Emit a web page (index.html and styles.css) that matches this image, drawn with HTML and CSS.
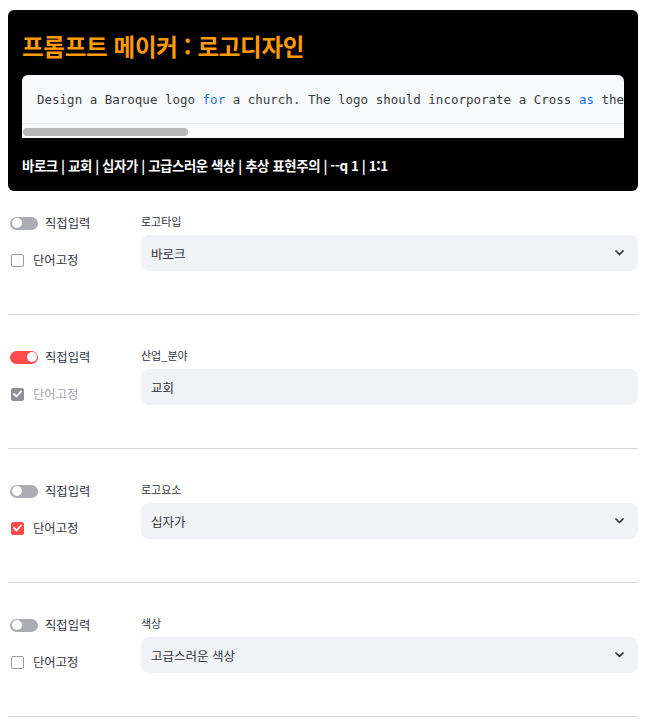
FILE: index.html
```html
<!DOCTYPE html>
<html lang="ko">
<head>
<meta charset="utf-8">
<title>프롬프트 메이커 : 로고디자인</title>
<link rel="stylesheet" href="styles.css">
</head>
<body>
<div class="hero">
  <h1 class="title">프롬프트 메이커 : 로고디자인</h1>
  <div class="code">
    <pre class="code-text">Design a Baroque logo <span class="kw">for</span> a church. The logo should incorporate a Cross <span class="kw">as</span> the</pre>
    <div class="track"><div class="thumb"></div></div>
  </div>
  <div class="tags">바로크 | 교회 | 십자가 | 고급스러운 색상 | 추상 표현주의 | --q 1 | 1:1</div>
</div>

<section class="row first">
  <div class="left">
    <div class="opt"><span class="toggle"></span><span>직접입력</span></div>
    <div class="opt chk"><span class="box"></span><span>단어고정</span></div>
  </div>
  <div class="right">
    <div class="label">로고타입</div>
    <div class="select"><span>바로크</span><svg class="chev" width="9" height="6" viewBox="0 0 9 6"><path d="M1 1l3.5 3.5L8 1" fill="none" stroke="#31333f" stroke-width="1.7" stroke-linecap="round" stroke-linejoin="round"/></svg></div>
  </div>
</section>

<section class="row">
  <div class="left">
    <div class="opt"><span class="toggle on"></span><span>직접입력</span></div>
    <div class="opt chk disabled"><span class="box checked grey"><svg width="9" height="8" viewBox="0 0 9 8"><path d="M1 4l2.5 2.5L8 1.5" fill="none" stroke="#fff" stroke-width="1.8" stroke-linecap="round" stroke-linejoin="round"/></svg></span><span>단어고정</span></div>
  </div>
  <div class="right">
    <div class="label">산업_분야</div>
    <div class="select input"><span>교회</span></div>
  </div>
</section>

<section class="row">
  <div class="left">
    <div class="opt"><span class="toggle"></span><span>직접입력</span></div>
    <div class="opt chk"><span class="box checked"><svg width="9" height="8" viewBox="0 0 9 8"><path d="M1 4l2.5 2.5L8 1.5" fill="none" stroke="#fff" stroke-width="1.8" stroke-linecap="round" stroke-linejoin="round"/></svg></span><span>단어고정</span></div>
  </div>
  <div class="right">
    <div class="label">로고요소</div>
    <div class="select"><span>십자가</span><svg class="chev" width="9" height="6" viewBox="0 0 9 6"><path d="M1 1l3.5 3.5L8 1" fill="none" stroke="#31333f" stroke-width="1.7" stroke-linecap="round" stroke-linejoin="round"/></svg></div>
  </div>
</section>

<section class="row">
  <div class="left">
    <div class="opt"><span class="toggle"></span><span>직접입력</span></div>
    <div class="opt chk"><span class="box"></span><span>단어고정</span></div>
  </div>
  <div class="right">
    <div class="label">색상</div>
    <div class="select"><span>고급스러운 색상</span><svg class="chev" width="9" height="6" viewBox="0 0 9 6"><path d="M1 1l3.5 3.5L8 1" fill="none" stroke="#31333f" stroke-width="1.7" stroke-linecap="round" stroke-linejoin="round"/></svg></div>
  </div>
</section>
</body>
</html>
```

FILE: styles.css
```css
html, body {
  background: #ffffff;
}
body {
  margin: 10px 14px 0 8px;
  font-family: "Noto Sans CJK KR", "Noto Sans", sans-serif;
  color: #31333f;
}
.hero {
  background: #000000;
  border-radius: 6px;
  padding: 20px 14px 16px 14px;
}
.title {
  margin: 0;
  font-size: 23.5px;
  line-height: 32px;
  font-weight: 700;
  color: #ff9a00;
  letter-spacing: -0.3px;
}
.code {
  margin-top: 13px;
  background: #f8f9fb;
  border-radius: 6px 6px 0 0;
  overflow: hidden;
}
.code-text {
  margin: 0;
  padding: 16px 0 14px 15px;
  font-family: "DejaVu Sans Mono", "Liberation Mono", monospace;
  font-size: 12.5px;
  line-height: 18px;
  color: #3a3c44;
  white-space: pre;
  overflow: hidden;
  border-bottom: 1px solid #e6e7ea;
}
.kw {
  color: #1a73e8;
}
.track {
  height: 14px;
  background: #fbfbfc;
  padding-top: 4px;
  box-sizing: border-box;
}
.thumb {
  width: 165px;
  height: 8px;
  margin-left: 1px;
  border-radius: 4px;
  background: #b8b8b8;
}
.tags {
  margin-top: 17px;
  font-size: 13.4px;
  line-height: 20px;
  font-weight: 700;
  color: #ffffff;
  letter-spacing: -0.4px;
}
.row {
  display: flex;
  padding: 32px 0 43px 0;
  border-bottom: 1px solid #d6d6d9;
}
.row.first {
  padding-top: 22px;
}
.left {
  width: 133px;
  flex: none;
  display: flex;
  flex-direction: column;
  gap: 17px;
}
.opt {
  display: flex;
  align-items: center;
  height: 20px;
  font-size: 12.3px;
  gap: 7px;
  padding-left: 2px;
}
.opt.chk {
  gap: 9px;
  padding-left: 3px;
}
.opt.disabled {
  color: #a5a6ad;
}
.toggle {
  position: relative;
  width: 28px;
  height: 13px;
  border-radius: 7px;
  background: #acadb3;
  flex: none;
}
.toggle::after {
  content: "";
  position: absolute;
  left: 1.5px;
  top: 1.5px;
  width: 10px;
  height: 10px;
  border-radius: 50%;
  background: #ffffff;
}
.toggle.on {
  background: #ff4b4b;
}
.toggle.on::after {
  left: 16.5px;
}
.box {
  width: 13px;
  height: 13px;
  box-sizing: border-box;
  border: 1px solid #9a9ba2;
  border-radius: 2px;
  background: #ffffff;
  flex: none;
  display: flex;
  align-items: center;
  justify-content: center;
}
.box.checked {
  background: #ff4b4b;
  border-color: #ff4b4b;
}
.box.checked.grey {
  background: #8f9096;
  border-color: #8f9096;
}
.right {
  flex: 1;
  min-width: 0;
}
.label {
  font-size: 11px;
  line-height: 16px;
  margin-bottom: 6px;
  color: #31333f;
}
.select {
  height: 36px;
  background: #f0f2f6;
  border-radius: 8px;
  display: flex;
  align-items: center;
  justify-content: space-between;
  padding: 0 14px 0 10px;
  font-size: 12.5px;
  color: #31333f;
}
.chev {
  display: block;
}
```
